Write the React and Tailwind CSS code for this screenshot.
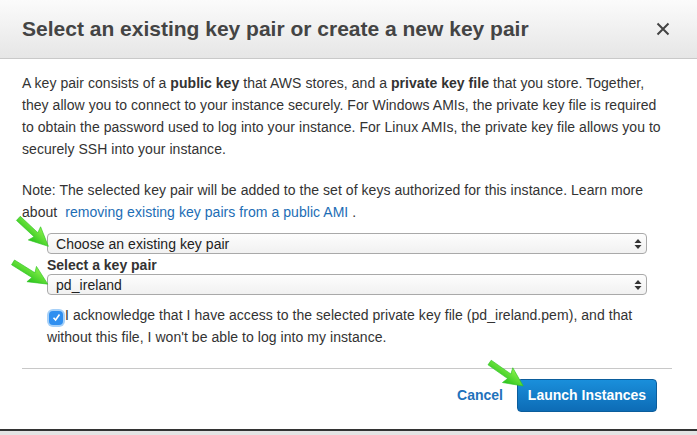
import React from "react";

function Arrow({ left, top, angle }) {
  return (
    <svg
      className="absolute"
      viewBox="-2 -10 44 20"
      width="44"
      height="20"
      style={{ left, top, transform: `rotate(${angle}deg)` }}
    >
      <defs>
        <linearGradient id="ag" x1="0" y1="0" x2="0" y2="1">
          <stop offset="0" stopColor="#8cf24c" />
          <stop offset="1" stopColor="#25c11a" />
        </linearGradient>
      </defs>
      <path d="M0 -2.8 L24 -2.8 L22 -9 L41 0 L22 9 L24 2.8 L0 2.8 Z" fill="url(#ag)" stroke="#2fc424" strokeWidth="0.6" strokeLinejoin="round" />
    </svg>
  );
}

function Select({ value }) {
  return (
    <div className="flex h-[21px] w-[600px] items-center justify-between rounded-[4px] border border-[#a9a9a9] bg-gradient-to-b from-[#fdfdfd] to-[#f1f1f1] pl-[8px] pr-[4px] text-[14px] text-[#222]">
      <span>{value}</span>
      <svg width="8" height="12" viewBox="0 0 8 12">
        <path d="M4 1 L7.5 5 L0.5 5 Z" fill="#333" />
        <path d="M4 11 L7.5 7 L0.5 7 Z" fill="#333" />
      </svg>
    </div>
  );
}

export default function App() {
  return (
    <div className="relative h-[435px] w-[697px] overflow-hidden bg-white" style={{ fontFamily: '"Liberation Sans", Arial, sans-serif' }}>
      <div className="flex h-[435px] flex-col">
        <div className="flex h-[59px] shrink-0 items-center justify-between border-b border-[#c9c9c9] bg-gradient-to-b from-[#fbfbfb] to-[#e6e6e6] pl-[22px] pr-[27px]">
          <h1 className="text-[21px] font-bold text-[#444]">Select an existing key pair or create a new key pair</h1>
          <svg width="14" height="14" viewBox="0 0 14 14">
            <path d="M1.5 1.5 L12.5 12.5 M12.5 1.5 L1.5 12.5" stroke="#444" strokeWidth="2" />
          </svg>
        </div>
        <div className="px-[22px] pt-[13px] text-[14px] leading-[22px] tracking-[0.05px] text-[#333]">
          <p className="whitespace-nowrap">
            A key pair consists of a <b>public key</b> that AWS stores, and a <b>private key file</b> that you store. Together,
            <br />
            they allow you to connect to your instance securely. For Windows AMIs, the private key file is required
            <br />
            to obtain the password used to log into your instance. For Linux AMIs, the private key file allows you to
            <br />
            securely SSH into your instance.
          </p>
          <p className="mt-[19px] whitespace-nowrap">
            Note: The selected key pair will be added to the set of keys authorized for this instance. Learn more
            <br />
            about&nbsp; <span className="text-[#1c6db5]">removing existing key pairs from a public AMI</span> .
          </p>
          <div className="ml-[25px] mt-[10px]">
            <Select value="Choose an existing key pair" />
            <div className="mt-[2px] text-[14px] font-bold leading-[18px] tracking-normal text-[#333]">Select a key pair</div>
            <Select value="pd_ireland" />
            <div className="mt-[9px] whitespace-nowrap leading-[22px]">
              <span className="relative top-[2px] ml-[2px] mr-[2px] inline-flex h-[14px] w-[14px] items-center justify-center rounded-[4px] bg-[#2f8ff0] shadow-[0_0_0_2px_#a6d0f8]">
                <svg width="9" height="9" viewBox="0 0 9 9">
                  <path d="M1.5 4.8 L3.6 7 L7.5 1.5" stroke="white" strokeWidth="1.6" fill="none" />
                </svg>
              </span>
              I acknowledge that I have access to the selected private key file (pd_ireland.pem), and that
              <br />
              without this file, I won't be able to log into my instance.
            </div>
          </div>
        </div>
        <div className="ml-[22px] mr-[25px] mt-[20px] border-t border-[#c8c8c8]" />
        <div className="flex items-center justify-end gap-[14px] pr-[40px] pt-[10px]">
          <span className="text-[14px] font-bold text-[#1f72bb]">Cancel</span>
          <button className="h-[33px] w-[140px] rounded-[4px] border border-[#0b5d9c] bg-gradient-to-b from-[#1a8fdb] to-[#0d6cb6] text-[14px] font-bold text-white">
            Launch Instances
          </button>
        </div>
        <div className="mt-auto h-[6px] shrink-0 border-t-2 border-[#333] bg-[#e4e4e4]" />
      </div>
      <Arrow left={11} top={222} angle={43} />
      <Arrow left={8} top={263} angle={32} />
      <Arrow left={484} top={364} angle={35} />
    </div>
  );
}
